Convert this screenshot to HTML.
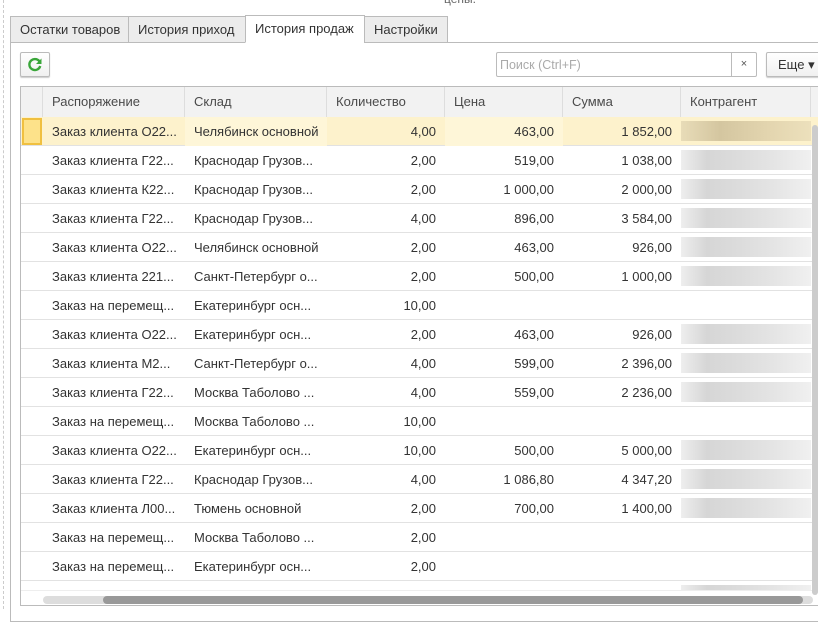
<!DOCTYPE html>
<html><head><meta charset="utf-8"><style>
*{box-sizing:border-box;margin:0;padding:0}
body{width:818px;height:609px;overflow:hidden;background:#fff;font-family:"Liberation Sans",Arial,sans-serif;font-size:13px;color:#333;position:relative}
.dash{position:absolute;left:3px;top:0;bottom:0;border-left:1px dashed #ccc}
.top{position:absolute;left:444px;top:-8px;color:#666;font-size:12px}
.tab{position:absolute;top:16px;height:27px;border:1px solid #bbb;background:#ececec;padding:5px 0 0 9px;font-size:13px;color:#333;white-space:nowrap;overflow:hidden}
.tab.a{background:#fff;border-bottom-color:#fff;height:28px;top:15px}
.panel{position:absolute;left:10px;top:42px;width:820px;height:580px;border:1px solid #bbb}
.btn{position:absolute;border:1px solid #bbb;border-radius:2px;background:linear-gradient(#fff,#f0f0f0);box-shadow:0 1px 1px #ccc}
.grid{position:absolute;left:20px;top:86px;width:800px;height:520px;border:1px solid #bbb;overflow:hidden}
.row{position:absolute;left:0;height:29px;width:800px;border-bottom:1px solid #e2e2e2}
.c{position:absolute;top:0;height:29px;line-height:30px;padding:0 9px;white-space:nowrap;overflow:hidden}
.r{text-align:right}
.hd{background:#f2f2f2;color:#4a4a4a;border-bottom:1px solid #ddd}
.hd .c{border-right:1px solid #ddd;height:30px;line-height:30px}
.sel{background:#fdf2cc}
.blur{position:absolute;left:660px;top:4px;width:130px;height:20px;background:linear-gradient(90deg,#eee,#d6d6d6 20%,#dcdcdc 45%,#e4e4e4 70%,#f0f0f0)}
</style></head><body>
<div class="dash"></div>
<div class="top">цены.</div>
<div class="panel"></div>
<div class="tab" style="left:10px;width:119px">Остатки товаров</div>
<div class="tab" style="left:128px;width:118px">История приход</div>
<div class="tab a" style="left:245px;width:120px">История продаж</div>
<div class="tab" style="left:364px;width:84px">Настройки</div>
<div class="btn" style="left:20px;top:52px;width:30px;height:25px"><svg width="28" height="23" viewBox="0 0 28 23"><path d="M19 9.5A5.5 5.5 0 1 0 19.2 13" fill="none" stroke="#3aa63a" stroke-width="2.4"/><path d="M20.5 5.5v5.5h-5.5z" fill="#3aa63a"/></svg></div>
<div style="position:absolute;left:496px;top:52px;width:261px;height:25px;border:1px solid #bbb;border-radius:2px"><span style="position:absolute;left:3px;top:5px;color:#aaa;font-size:12.5px">Поиск (Ctrl+F)</span><span style="position:absolute;left:234px;top:0;width:25px;height:23px;border-left:1px solid #bbb;text-align:center;line-height:22px;color:#555;font-size:11px">×</span></div>
<div class="btn" style="left:766px;top:52px;width:60px;height:25px;padding:4px 0 0 11px;font-size:13px">Еще ▾</div>
<div class="grid">
<div class="row hd" style="top:0;height:31px"><div class="c" style="left:0;width:22px"></div><div class="c" style="left:22px;width:142px">Распоряжение</div><div class="c" style="left:164px;width:142px">Склад</div><div class="c" style="left:306px;width:118px">Количество</div><div class="c" style="left:424px;width:118px">Цена</div><div class="c" style="left:542px;width:118px">Сумма</div><div class="c" style="left:660px;width:130px">Контрагент</div></div>
<div id="rows"></div>
<div style="position:absolute;left:0;top:503px;width:800px;height:16px;background:#fff;border-top:1px solid #eee"><div style="position:absolute;left:22px;top:5px;width:770px;height:8px;border-radius:4px;background:#ddd"></div><div style="position:absolute;left:82px;top:5px;width:700px;height:8px;border-radius:4px;background:#999"></div></div>
<div style="position:absolute;left:791px;top:30px;width:6px;height:470px"><div style="width:6px;height:470px;border-radius:3px;background:#ccc;margin-top:8px"></div></div>
</div>
<script>
var d=[["Заказ клиента О22...","Челябинск основной","4,00","463,00","1 852,00"],
["Заказ клиента Г22...","Краснодар Грузов...","2,00","519,00","1 038,00"],
["Заказ клиента К22...","Краснодар Грузов...","2,00","1 000,00","2 000,00"],
["Заказ клиента Г22...","Краснодар Грузов...","4,00","896,00","3 584,00"],
["Заказ клиента О22...","Челябинск основной","2,00","463,00","926,00"],
["Заказ клиента 221...","Санкт-Петербург о...","2,00","500,00","1 000,00"],
["Заказ на перемещ...","Екатеринбург осн...","10,00","",""],
["Заказ клиента О22...","Екатеринбург осн...","2,00","463,00","926,00"],
["Заказ клиента М2...","Санкт-Петербург о...","4,00","599,00","2 396,00"],
["Заказ клиента Г22...","Москва Таболово ...","4,00","559,00","2 236,00"],
["Заказ на перемещ...","Москва Таболово ...","10,00","",""],
["Заказ клиента О22...","Екатеринбург осн...","10,00","500,00","5 000,00"],
["Заказ клиента Г22...","Краснодар Грузов...","4,00","1 086,80","4 347,20"],
["Заказ клиента Л00...","Тюмень основной","2,00","700,00","1 400,00"],
["Заказ на перемещ...","Москва Таболово ...","2,00","",""],
["Заказ на перемещ...","Екатеринбург осн...","2,00","",""],
["Заказ клиента О22...","Новосибирск основной","2,00","463,00","926,00"]];
var h="";d.forEach(function(r,i){var t=30+i*29;var s=i==0;
h+='<div class="row'+(s?' sel':'')+'" style="top:'+t+'px">'+(s?'<div style="position:absolute;left:1px;top:1px;width:20px;height:27px;background:#fde28a;border:2px solid #f0c040"></div>':'')+
'<div class="c" style="left:22px;width:142px">'+r[0]+'</div><div class="c" style="left:164px;width:142px'+(s?';background:#fef6d8':'')+'">'+r[1]+'</div><div class="c r" style="left:306px;width:118px">'+r[2]+'</div><div class="c r" style="left:424px;width:118px'+(s?';background:#fef6d8':'')+'">'+r[3]+'</div><div class="c r" style="left:542px;width:118px">'+r[4]+'</div>'+(r[3]?'<div class="blur"'+(s?' style="background:linear-gradient(90deg,#e8dcb8,#d4c6a0 30%,#e4d6b0 70%,#ece0bc)"':'')+'></div>':'')+'</div>';});
document.getElementById("rows").innerHTML=h;
</script>
</body></html>
